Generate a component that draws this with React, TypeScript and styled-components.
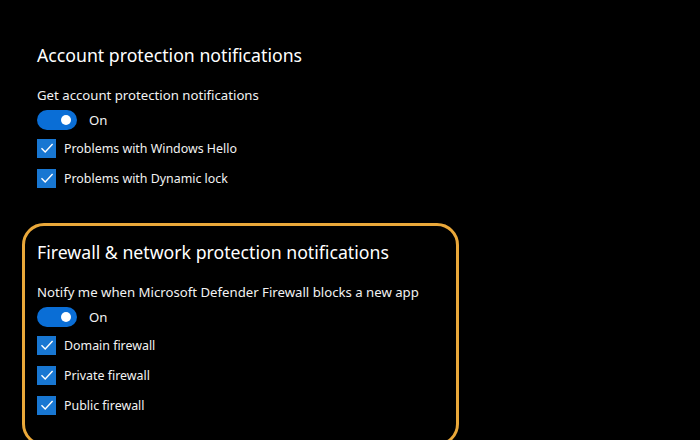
import { createGlobalStyle, styled } from "styled-components";

const GlobalStyle = createGlobalStyle`
  html, body {
    margin: 0;
    background: #000;
  }
  body {
    font-family: "Noto Sans", "Liberation Sans", sans-serif;
    color: #fff;
  }
`;

type Section = {
  title: string;
  label: string;
  options: string[];
  highlighted?: boolean;
};

const sections: Section[] = [
  {
    title: "Account protection notifications",
    label: "Get account protection notifications",
    options: ["Problems with Windows Hello", "Problems with Dynamic lock"],
  },
  {
    title: "Firewall & network protection notifications",
    label: "Notify me when Microsoft Defender Firewall blocks a new app",
    options: ["Domain firewall", "Private firewall", "Public firewall"],
    highlighted: true,
  },
];

const CheckIcon = () => (
  <svg width="14" height="14" viewBox="0 0 14 14" fill="none">
    <path d="M1.5 7.2 L5.2 11 L12.6 3" stroke="#fff" strokeWidth="1.4" />
  </svg>
);

const App = () => {
  return (
    <Page>
      <GlobalStyle />
      {sections.map((s) => (
        <SettingsGroup key={s.title} $highlighted={s.highlighted}>
          <Title>{s.title}</Title>
          <Label>{s.label}</Label>
          <ToggleRow>
            <Toggle>
              <Knob />
            </Toggle>
            <span>On</span>
          </ToggleRow>
          <Options>
            {s.options.map((o) => (
              <CheckRow key={o}>
                <Box>
                  <CheckIcon />
                </Box>
                <span>{o}</span>
              </CheckRow>
            ))}
          </Options>
        </SettingsGroup>
      ))}
    </Page>
  );
};

const Page = styled.div`
  width: 700px;
  height: 440px;
  overflow: hidden;
  padding: 26px 0 0 22px;
  box-sizing: border-box;
  display: flex;
  flex-direction: column;
  gap: 32px;
`;

const SettingsGroup = styled.section<{ $highlighted?: boolean }>`
  width: 437px;
  flex-shrink: 0;
  box-sizing: border-box;
  padding: 12px 12px ${(p) => (p.$highlighted ? "28px" : "0")} 12px;
  border: 3px solid ${(p) => (p.$highlighted ? "#eaa83a" : "transparent")};
  border-radius: 22px;
`;

const Title = styled.h2`
  margin: 0;
  font-size: 17.7px;
  font-weight: 400;
  line-height: 28px;
  color: #fff;
`;

const Label = styled.div`
  margin-top: 16px;
  font-size: 13.2px;
  line-height: 20px;
  color: #f2f2f2;
`;

const ToggleRow = styled.div`
  margin-top: 5px;
  display: flex;
  align-items: center;
  gap: 12px;
  height: 20px;
  font-size: 13.2px;
  color: #f2f2f2;
`;

const Toggle = styled.div`
  width: 40px;
  height: 20px;
  border-radius: 10px;
  background: #0a6ed6;
  display: flex;
  align-items: center;
  justify-content: flex-end;
  padding-right: 6px;
  box-sizing: border-box;
`;

const Knob = styled.div`
  width: 10px;
  height: 10px;
  border-radius: 50%;
  background: #fff;
`;

const Options = styled.div`
  margin-top: 8px;
  display: flex;
  flex-direction: column;
  gap: 10px;
`;

const CheckRow = styled.div`
  display: flex;
  align-items: center;
  gap: 8px;
  height: 20px;
  font-size: 12.4px;
  color: #f2f2f2;
`;

const Box = styled.div`
  width: 19px;
  height: 19px;
  background: #1877d2;
  display: flex;
  align-items: center;
  justify-content: center;
`;

export default App;
